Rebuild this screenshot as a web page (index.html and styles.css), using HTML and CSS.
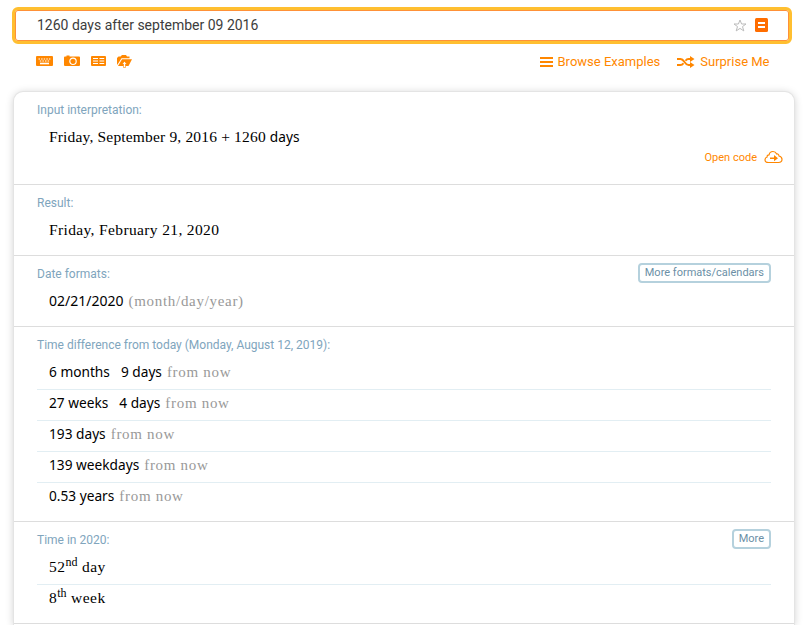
FILE: index.html
```html
<!DOCTYPE html>
<html lang="en">
<head>
<meta charset="utf-8">
<title>1260 days after september 09 2016</title>
<link rel="stylesheet" href="styles.css">
</head>
<body>
<header>
  <div class="search">
    <span class="query">1260 days after september 09 2016</span>
    <svg class="star" width="14" height="13" viewBox="0 0 14 13"><path d="M7 1l1.600 4H13L9.500 7.600l1.300 4.300L7 9.400l-3.800 2.500 1.300-4.300L1 5h4.400z" fill="none" stroke="#bbb"/></svg>
    <svg class="equals" width="13" height="14" viewBox="0 0 13 14"><rect width="13" height="14" rx="1.500" fill="#ff6d00"/><path d="M3 4h7v2H3zM3 8h7v2H3z" fill="#fff"/></svg>
  </div>
  <nav class="tools">
    <div class="inputs">
      <svg width="17" height="12" viewBox="0 0 17 12"><rect y="1" width="17" height="10" rx="1" fill="#ff8700"/><path d="M2.500 4h12" stroke="#fff" stroke-width="1.100" stroke-dasharray="1.500 1.100"/><path d="M3.800 6h10" stroke="#fff" stroke-width="1.100" stroke-dasharray="1.500 1.100"/><path d="M4 8.500h9" stroke="#fff" stroke-width="1.600"/></svg>
      <svg width="16" height="12" viewBox="0 0 16 12"><path d="M1 1.500h1.500V.5h3v1H15q1 0 1 1V10q0 1-1 1H1q-1 0-1-1V2.500q0-1 1-1z" fill="#ff8700"/><circle cx="9" cy="6.300" r="3.200" fill="none" stroke="#fff" stroke-width="1.200"/></svg>
      <svg width="15" height="12" viewBox="0 0 15 12"><rect y="1" width="15" height="10" rx="1" fill="#ff8700"/><path d="M2 3.500h5M8.500 3.500h4.700M2 6h5M8.500 6h4.700M2 8.500h5M8.500 8.500h4.700" stroke="#fff" stroke-width="1.200"/></svg>
      <svg width="15" height="14" viewBox="0 0 15 14"><path d="M0 11V4l1.500-1.500h2L5 1h4l1 1.500h2.500v1.700H4.500L1.500 9z" fill="#ff8700"/><path d="M5 5.200H15L11.500 12H1z" fill="#ff8700"/><path d="M7.500 7.500L10 10H8.500v3.500h-2V10H5z" fill="#fff" stroke="#ff8700" stroke-width=".6"/></svg>
    </div>
    <a class="browse"><svg width="13" height="10" viewBox="0 0 13 10"><path d="M0 1h13M0 5h13M0 9h13" stroke="#ff8700" stroke-width="1.900"/></svg>Browse Examples</a>
    <a class="surprise"><svg width="18" height="12" viewBox="0 0 18 12"><path d="M0 3h3.500c4 0 4 6 8 6H14M0 9h3.500c1.500 0 2.300-.8 3-1.800M8.500 4.800c.8-1.200 1.500-1.800 3-1.800H14" fill="none" stroke="#ff8700" stroke-width="1.900"/><path d="M13 0l4.500 3L13 6zM13 6l4.500 3-4.500 3z" fill="#ff8700"/></svg>Surprise Me</a>
  </nav>
</header>
<main class="card">
  <section class="pod first">
    <h2>Input interpretation:</h2>
    <p class="row"><span class="serif input-date">Friday, September 9, 2016 + 1260</span><span class="sans">days</span></p>
    <a class="code">Open code<svg width="19" height="14" viewBox="0 0 19 14"><path d="M4.500 12.500h10c2 0 3.500-1.500 3.500-3.200S16.700 6.500 15 6C14.800 4.600 14 3.800 12.700 4 11.800 2 10.700 1.500 9 1.500c-2.300 0-3.600 1.300-3.900 3.300C3.600 4.900 3 5.800 3.100 7 1.700 7.400 1 8.200 1 9.700c0 1.800 1.500 2.800 3.500 2.800z" fill="none" stroke="#ff8700" stroke-width="1.200"/><path d="M6 7.500h4V5l4 3.300-4 3V9H6z" fill="#ff8700"/></svg></a>
  </section>
  <section class="pod">
    <h2>Result:</h2>
    <p class="row"><span class="serif result-date">Friday, February 21, 2020</span></p>
  </section>
  <section class="pod">
    <h2>Date formats:</h2><button>More formats/calendars</button>
    <p class="row"><span class="sans number">02/21/2020</span><span class="note format">(month/day/year)</span></p>
  </section>
  <section class="pod list difference">
    <h2>Time difference from today (Monday, August 12, 2019):</h2>
    <p class="row"><span class="sans">6 months</span><span class="sans">9 days</span><span class="note">from now</span></p>
    <p class="row"><span class="sans">27 weeks</span><span class="sans">4 days</span><span class="note">from now</span></p>
    <p class="row"><span class="sans">193 days</span><span class="note">from now</span></p>
    <p class="row"><span class="sans">139 weekdays</span><span class="note">from now</span></p>
    <p class="row"><span class="sans">0.53 years</span><span class="note">from now</span></p>
  </section>
  <section class="pod list ordinal">
    <h2>Time in 2020:</h2><button>More</button>
    <p class="row"><span class="serif">52<sup>nd</sup> day</span></p>
    <p class="row"><span class="serif">8<sup>th</sup> week</span></p>
  </section>
</main>
</body>
</html>
```
FILE: styles.css
```css
* { box-sizing: border-box; }
html { height: 100%; overflow: hidden; background: #fff; }
body { margin: 0; height: 100%; overflow: hidden; font-family: Roboto, sans-serif; }
header { height: 92px; padding: 7px 14px 0 12px; }
.search { height: 37px; border: 3px solid #ffbf30; border-radius: 6px; box-shadow: inset 0 0 0 1px #ff9138; display: flex; align-items: center; padding: 0 21px 1px 22px; }
.query { flex: 1; font-size: 14px; color: #3c3c3c; }
.star { margin-right: 8px; }
.tools { display: flex; align-items: center; height: 35px; padding: 0 22.5px 0 24px; font-size: 13px; color: #ff8700; }
.inputs { display: flex; align-items: center; gap: 11px; flex: 1; padding-bottom: 1px; }
.tools a { display: flex; align-items: center; }
.browse { gap: 5px; margin-right: 17px; }
.surprise { gap: 5px; }
.card { width: 780px; height: 533px; margin-left: 14px; border-radius: 9px 9px 0 0; background: #fff; box-shadow: 0 0 0 1px #e4e4e4, 0 1px 9px rgba(0,0,0,.22); }
.pod { position: relative; height: 71px; padding: 10px 23px 0; border-bottom: 1px solid #ddd; }
.first { height: 93px; }
.difference { height: 195px; }
.ordinal { height: 102px; }
h2 { margin: 0; height: 17px; line-height: 17px; font-size: 12px; font-weight: 400; color: #80a5bd; }
.row { display: flex; align-items: baseline; margin: 0; height: 31px; padding: 8px 0 0 12px; line-height: 20px; white-space: pre; }
.list h2 { height: 20px; }
.list .row { padding-top: 5px; }
.list h2 + .row, .list button + .row { height: 32px; }
.list .row + .row { border-top: 1px solid #e2eef3; padding-top: 3px; }
.list .row:last-child { height: 30px; }
.serif { font: 15.5px/20px "Liberation Serif", serif; letter-spacing: .17px; color: #000; }
.result-date { letter-spacing: .36px; }
.ordinal .serif { letter-spacing: .5px; }
.sans { font: 13.7px/20px "Noto Sans", sans-serif; color: #000; }
.number { font-size: 14px; }
.note { font: 15px/20px "Liberation Serif", serif; letter-spacing: .7px; color: #999; margin-left: 5px; }
.row .sans + .sans { margin-left: 11px; }
.input-date { margin-right: 4px; }
sup { font-size: 12px; line-height: 0; vertical-align: 6px; letter-spacing: 0; }
.code { position: absolute; top: 58px; right: 11px; display: flex; align-items: center; gap: 7px; font-size: 11px; color: #ff8700; }
button { position: absolute; top: 7px; right: 23px; height: 20px; padding: 0 5px 2px; border: 2px solid #b5d1dd; border-radius: 4px; background: #fff; font: 11px Roboto, sans-serif; color: #6b8fa6; }
```
